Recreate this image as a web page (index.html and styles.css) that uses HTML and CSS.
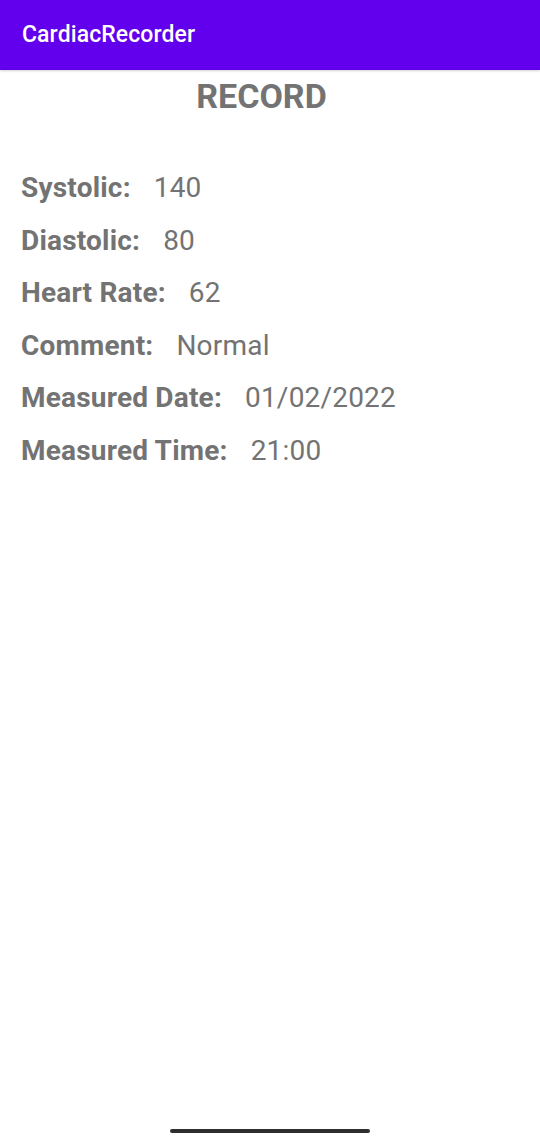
FILE: index.html
```html
<!DOCTYPE html>
<html>
<head>
<meta charset="utf-8">
<link rel="stylesheet" href="styles.css">
</head>
<body>
<div class="screen">
  <header class="appbar"><span class="appbar-title">CardiacRecorder</span></header>
  <main class="content">
    <h1 class="heading">RECORD</h1>
    <div class="rows">
      <div class="row"><span class="label">Systolic:</span><span class="value">140</span></div>
      <div class="row"><span class="label">Diastolic:</span><span class="value">80</span></div>
      <div class="row"><span class="label">Heart Rate:</span><span class="value">62</span></div>
      <div class="row"><span class="label">Comment:</span><span class="value">Normal</span></div>
      <div class="row"><span class="label">Measured Date:</span><span class="value">01/02/2022</span></div>
      <div class="row"><span class="label">Measured Time:</span><span class="value">21:00</span></div>
    </div>
  </main>
  <div class="home-bar"></div>
</div>
</body>
</html>
```
FILE: styles.css
```css
* { box-sizing: border-box; }
html, body { margin: 0; padding: 0; background: #ffffff; }
body { font-family: Roboto, "Noto Sans", sans-serif; }
.screen {
  width: 540px;
  height: 1142px;
  display: flex;
  flex-direction: column;
  overflow: hidden;
}
.appbar {
  height: 70px;
  background: #6200ee;
  display: flex;
  align-items: center;
  padding-left: 22px;
  padding-bottom: 2px;
  box-shadow: 0 1px 2px rgba(0,0,0,0.18);
  flex-shrink: 0;
}
.appbar-title {
  color: #ffffff;
  font-size: 23px;
  font-weight: 500;
  letter-spacing: 0.1px;
}
.content {
  flex: 1;
  display: flex;
  flex-direction: column;
}
.heading {
  margin: 6px 0 0 0;
  padding-right: 17px;
  text-align: center;
  font-size: 34px;
  line-height: 40px;
  font-weight: 700;
  color: #737373;
}
.rows {
  margin-top: 46px;
  padding-left: 21px;
  display: flex;
  flex-direction: column;
}
.row {
  height: 52.5px;
  line-height: 52px;
  font-size: 28px;
  letter-spacing: 0.2px;
  color: #737373;
  display: flex;
  gap: 23px;
}
.label { font-weight: 700; }
.value { font-weight: 400; }
.home-bar {
  width: 200px;
  height: 4px;
  border-radius: 2px;
  background: #2e2e2e;
  align-self: center;
  margin-bottom: 9px;
  flex-shrink: 0;
}
```
